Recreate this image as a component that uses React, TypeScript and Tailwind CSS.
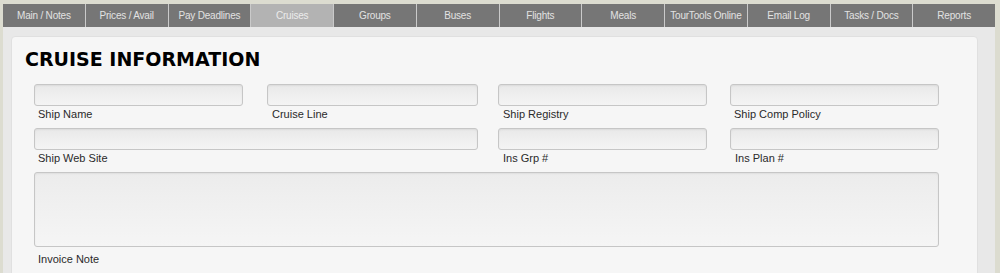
import React from "react";

const tabs = [
  "Main / Notes",
  "Prices / Avail",
  "Pay Deadlines",
  "Cruises",
  "Groups",
  "Buses",
  "Flights",
  "Meals",
  "TourTools Online",
  "Email Log",
  "Tasks / Docs",
  "Reports",
];

const inputCls =
  "block h-[22px] rounded-[3px] border border-[#c6c6c6] bg-linear-to-b from-[#e9e9e9] to-[#f4f4f4] shadow-[inset_0_1px_2px_rgba(0,0,0,0.06)] outline-none";

function Label({ children, pl = "pl-[4px]" }: { children: React.ReactNode; pl?: string }) {
  return (
    <div className={`h-[22px] pt-[1px] text-[11px] leading-[14px] text-[#2a2a2a] ${pl}`}>{children}</div>
  );
}

export default function App() {
  return (
    <div
      className="w-[1000px] h-[273px] overflow-hidden bg-[#dcdcd0] pt-[4px] pl-[3px] pr-[5px]"
      style={{ fontFamily: '"Liberation Sans", Arial, sans-serif' }}
    >
      <div className="flex h-[23px] bg-[#767676]">
        {tabs.map((t, i) => (
          <div
            key={t}
            className={`flex-1 flex items-center justify-center text-[10px] tracking-[-0.2px] ${
              i > 0 ? "border-l border-[#cacaca]" : ""
            } ${t === "Cruises" ? "bg-[#b3b3b3] text-[#ececec]" : "text-[#e2e2e2]"}`}
          >
            {t}
          </div>
        ))}
      </div>
      <div className="h-[250px] bg-[#e8e8e8] pl-[8px] pr-[17px] pt-[9px]">
        <div className="h-[260px] rounded-[4px] border border-[#e0e0e0] bg-[#f6f6f6] pl-[13px] pt-[11px]">
          <h1
            className="text-[19px] leading-[22px] font-bold text-black"
            style={{ fontFamily: '"DejaVu Sans", Verdana, sans-serif' }}
          >
            CRUISE INFORMATION
          </h1>
          <div className="mt-[14px] ml-[9px] grid grid-cols-[233px_231px_232px_209px]">
            <div>
              <input className={`${inputCls} w-[209px]`} />
              <Label>Ship Name</Label>
            </div>
            <div>
              <input className={`${inputCls} w-[211px]`} />
              <Label pl="pl-[5px]">Cruise Line</Label>
            </div>
            <div>
              <input className={`${inputCls} w-[209px]`} />
              <Label pl="pl-[5px]">Ship Registry</Label>
            </div>
            <div>
              <input className={`${inputCls} w-[209px]`} />
              <Label>Ship Comp Policy</Label>
            </div>

            <div className="col-span-2">
              <input className={`${inputCls} w-[444px]`} />
              <Label>Ship Web Site</Label>
            </div>
            <div>
              <input className={`${inputCls} w-[209px]`} />
              <Label pl="pl-[5px]">Ins Grp #</Label>
            </div>
            <div>
              <input className={`${inputCls} w-[209px]`} />
              <Label pl="pl-[5px]">Ins Plan #</Label>
            </div>

            <div className="col-span-4">
              <textarea
                className="block h-[75px] w-[905px] resize-none rounded-[3px] border border-[#c6c6c6] bg-linear-to-b from-[#ececec] to-[#f5f5f5] shadow-[inset_0_1px_2px_rgba(0,0,0,0.06)] outline-none"
              />
              <div className="pt-[5px] pl-[4px] text-[11px] leading-[14px] text-[#2a2a2a]">Invoice Note</div>
            </div>
          </div>
        </div>
      </div>
    </div>
  );
}
